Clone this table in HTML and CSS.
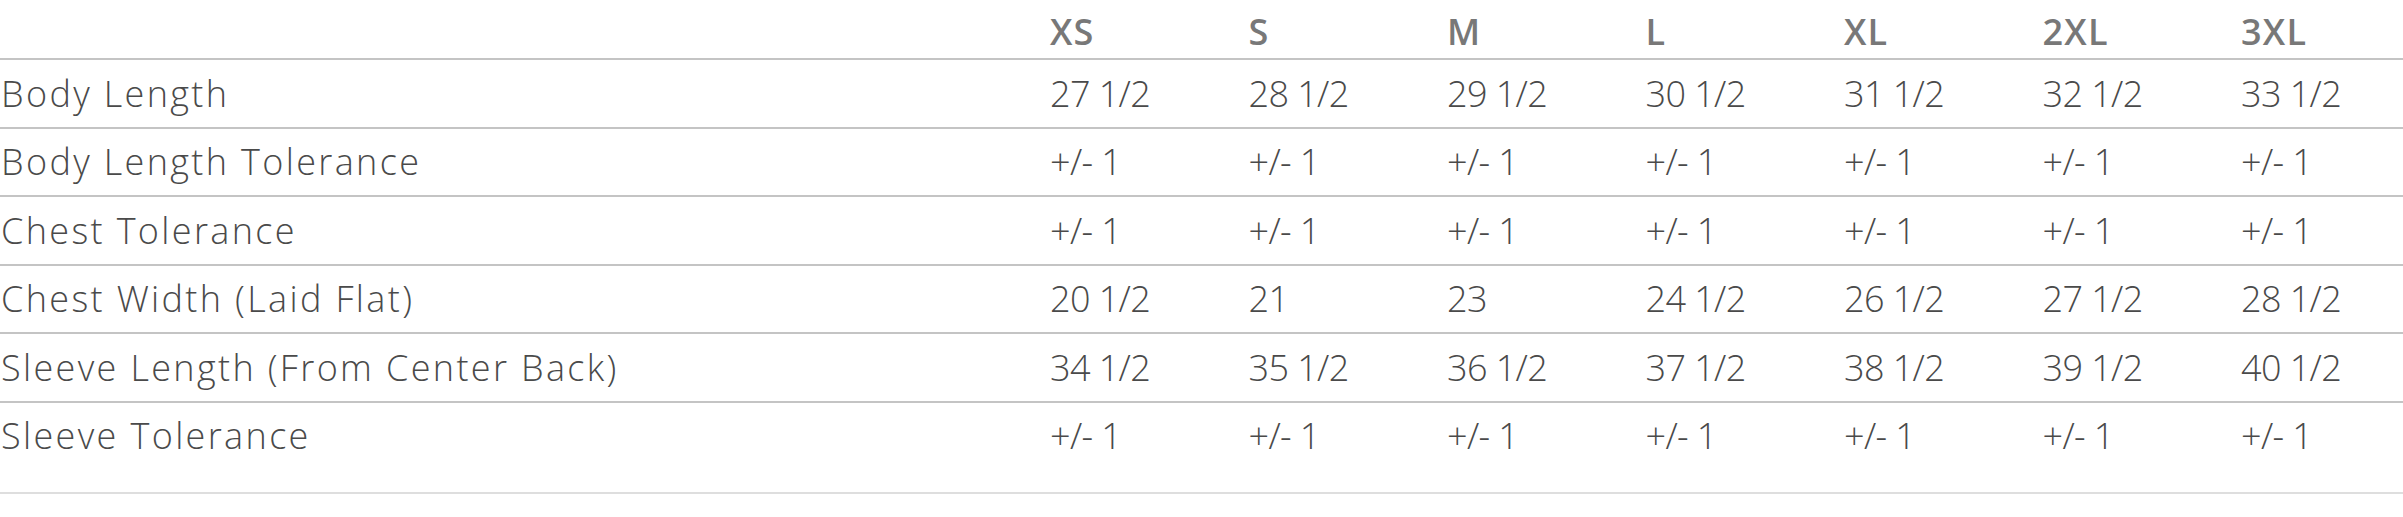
FILE: index.html
```html
<!DOCTYPE html>
<html lang="en">
<head>
<meta charset="utf-8">
<title>Size Chart</title>
<link rel="stylesheet" href="styles.css">
</head>
<body>
<div class="size-table">
  <div class="row head">
    <div class="cell label"></div>
    <div class="cell">XS</div>
    <div class="cell">S</div>
    <div class="cell">M</div>
    <div class="cell">L</div>
    <div class="cell">XL</div>
    <div class="cell">2XL</div>
    <div class="cell">3XL</div>
  </div>
  <div class="row">
    <div class="cell label">Body Length</div>
    <div class="cell">27 1/2</div>
    <div class="cell">28 1/2</div>
    <div class="cell">29 1/2</div>
    <div class="cell">30 1/2</div>
    <div class="cell">31 1/2</div>
    <div class="cell">32 1/2</div>
    <div class="cell">33 1/2</div>
  </div>
  <div class="row">
    <div class="cell label">Body Length Tolerance</div>
    <div class="cell">+/- 1</div>
    <div class="cell">+/- 1</div>
    <div class="cell">+/- 1</div>
    <div class="cell">+/- 1</div>
    <div class="cell">+/- 1</div>
    <div class="cell">+/- 1</div>
    <div class="cell">+/- 1</div>
  </div>
  <div class="row">
    <div class="cell label">Chest Tolerance</div>
    <div class="cell">+/- 1</div>
    <div class="cell">+/- 1</div>
    <div class="cell">+/- 1</div>
    <div class="cell">+/- 1</div>
    <div class="cell">+/- 1</div>
    <div class="cell">+/- 1</div>
    <div class="cell">+/- 1</div>
  </div>
  <div class="row">
    <div class="cell label">Chest Width (Laid Flat)</div>
    <div class="cell">20 1/2</div>
    <div class="cell">21</div>
    <div class="cell">23</div>
    <div class="cell">24 1/2</div>
    <div class="cell">26 1/2</div>
    <div class="cell">27 1/2</div>
    <div class="cell">28 1/2</div>
  </div>
  <div class="row">
    <div class="cell label">Sleeve Length (From Center Back)</div>
    <div class="cell">34 1/2</div>
    <div class="cell">35 1/2</div>
    <div class="cell">36 1/2</div>
    <div class="cell">37 1/2</div>
    <div class="cell">38 1/2</div>
    <div class="cell">39 1/2</div>
    <div class="cell">40 1/2</div>
  </div>
  <div class="row">
    <div class="cell label">Sleeve Tolerance</div>
    <div class="cell">+/- 1</div>
    <div class="cell">+/- 1</div>
    <div class="cell">+/- 1</div>
    <div class="cell">+/- 1</div>
    <div class="cell">+/- 1</div>
    <div class="cell">+/- 1</div>
    <div class="cell">+/- 1</div>
  </div>
</div>
</body>
</html>
```

FILE: styles.css
```css
html, body {
  margin: 0;
  padding: 0;
  background: #ffffff;
}

body {
  font-family: "Open Sans", "Liberation Sans", sans-serif;
  font-weight: 300;
  font-size: 36px;
  color: #4a4a4a;
}

.size-table {
  width: 100%;
  padding-bottom: 22.5px;
  border-bottom: 2px solid #dedede;
}

.row {
  display: grid;
  grid-template-columns: 1050px repeat(6, 198.5px) 1fr;
  align-items: center;
  height: 66.5px;
  border-bottom: 2px solid #c4c4c4;
}

.row:last-child {
  border-bottom: none;
}

.row.head {
  height: 58.3px;
  align-items: end;
}

.cell {
  line-height: 48px;
  white-space: nowrap;
  letter-spacing: -0.6px;
}

.cell.label {
  letter-spacing: 2.35px;
  padding-left: 1px;
}

.row.head .cell {
  font-weight: 600;
  color: #787878;
  letter-spacing: 1.2px;
  padding-bottom: 2px;
}
```
